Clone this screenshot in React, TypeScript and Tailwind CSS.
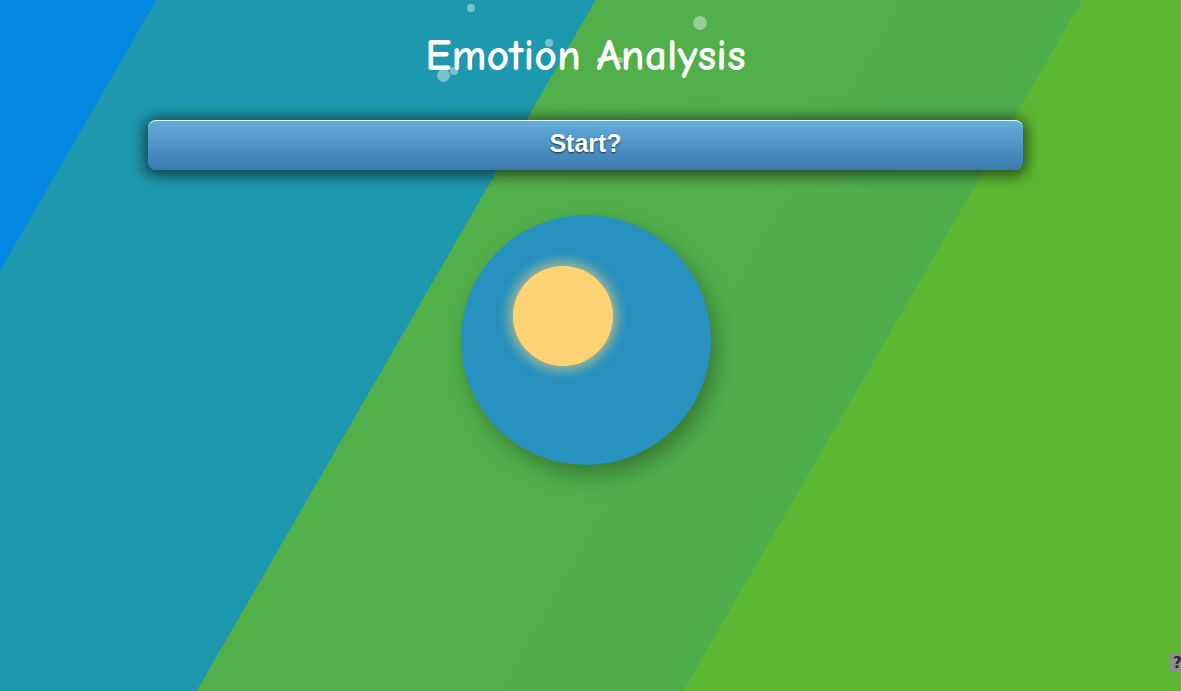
import { useState } from 'react';

const bubbles = [
  { left: 467, top: 4, size: 8 },
  { left: 693, top: 16, size: 14 },
  { left: 545, top: 39, size: 8 },
  { left: 437, top: 69, size: 13 },
  { left: 450, top: 67, size: 8 },
  { left: 617, top: 57, size: 6 },
];

export default function App() {
  const [started, setStarted] = useState(false);

  return (
    <div className="relative min-h-screen w-full overflow-hidden bg-[linear-gradient(120deg,#0489e2_9.9%,#1e98ae_9.9%,#1e98ae_37.7%,#52b04b_37.7%,#4fae4c_68.5%,#5db733_68.5%)]">

      {/* Bubbles */}
      {bubbles.map((b, i) => (
        <span
          key={i}
          className="absolute rounded-full bg-white/40"
          style={{ left: b.left, top: b.top, width: b.size, height: b.size }}
        />
      ))}

      <div className="relative flex flex-col items-center pr-[10px]">
        {/* Title */}
        <h1 className="mt-[27px] h-[58px] text-[44px] leading-[58px] text-white font-bold [font-family:'Comic_Sans_MS','Comic_Neue','Lato',sans-serif]">
          Emotion Analysis
        </h1>

        {/* Start button */}
        <button
          className="mt-[35px] w-[875px] h-[50px] pb-[3px] rounded-[8px] border-t border-white/90 bg-[linear-gradient(to_bottom,#63aed9,#3a7aae)] shadow-[0_2px_14px_4px_rgba(0,0,0,0.55)] text-white text-[25px] font-bold [font-family:'Liberation_Sans',Arial,sans-serif] [text-shadow:0_1px_2px_rgba(0,0,0,0.7)] cursor-pointer"
          onClick={() => setStarted(!started)}
        >
          Start?
        </button>

        {/* Sky circle */}
        <div className="mt-[45px] w-[250px] h-[250px] rounded-full bg-[#2791bf] shadow-[6px_10px_22px_rgba(0,0,0,0.3)] flex">
          <div className="ml-[52px] mt-[51px] w-[100px] h-[100px] rounded-full bg-[#ffd373] shadow-[0_0_12px_4px_rgba(255,211,115,0.6)]" />
        </div>
      </div>

      {/* Help */}
      <div className="absolute left-[1170px] top-[654px] w-[22px] h-[18px] bg-[#8c8f86] text-[#1f2937] text-[15px] leading-[18px] pl-[3px] font-bold [font-family:'DejaVu_Sans',sans-serif]">
        ?
      </div>
    </div>
  );
}
